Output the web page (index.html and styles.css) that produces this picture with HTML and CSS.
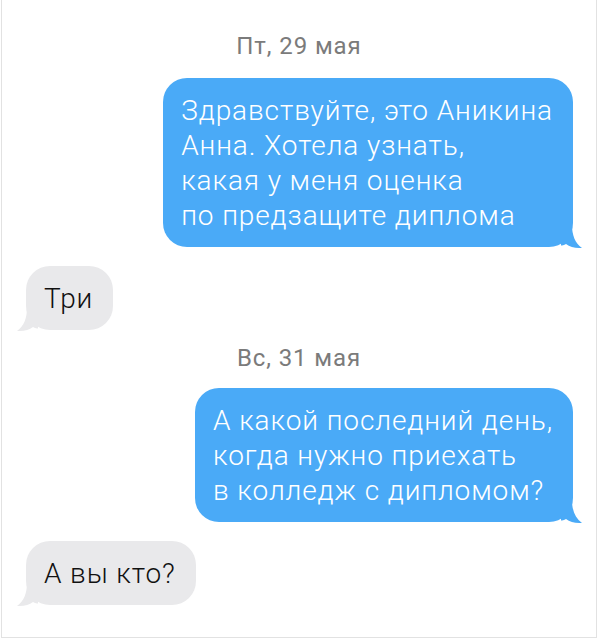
FILE: index.html
```html
<!DOCTYPE html>
<html lang="ru">
<head>
    <meta charset="UTF-8">
    <meta name="viewport" content="width=device-width, initial-scale=1.0">
    <title>Сообщения</title>
    <link rel="stylesheet" href="styles.css">
</head>
<body>
    <div class="chat">
        <div class="date date-first">Пт, 29 мая</div>

        <div class="bubble out">
            Здравствуйте, это Аникина<br>
            Анна. Хотела узнать,<br>
            какая у меня оценка<br>
            по предзащите диплома
            <svg class="tail" viewBox="0 0 22 24" width="22" height="24"><path d="M0 0 H11 C11 10 14 18 21 23 C14 23.5 9 22 5 19 C3 20 1 20.5 0 20.5 Z"/></svg>
        </div>

        <div class="bubble in">
            Три
            <svg class="tail" viewBox="0 0 22 24" width="22" height="24"><path d="M0 0 H11 C11 10 14 18 21 23 C14 23.5 9 22 5 19 C3 20 1 20.5 0 20.5 Z"/></svg>
        </div>

        <div class="date">Вс, 31 мая</div>

        <div class="bubble out">
            А какой последний день,<br>
            когда нужно приехать<br>
            в колледж с дипломом?
            <svg class="tail" viewBox="0 0 22 24" width="22" height="24"><path d="M0 0 H11 C11 10 14 18 21 23 C14 23.5 9 22 5 19 C3 20 1 20.5 0 20.5 Z"/></svg>
        </div>

        <div class="bubble in">
            А вы кто?
            <svg class="tail" viewBox="0 0 22 24" width="22" height="24"><path d="M0 0 H11 C11 10 14 18 21 23 C14 23.5 9 22 5 19 C3 20 1 20.5 0 20.5 Z"/></svg>
        </div>
    </div>
</body>
</html>
```

FILE: styles.css
```css
body {
    margin: 0;
    background: #fff;
    font-family: Roboto, "Noto Sans", sans-serif;
}
.chat {
    box-sizing: border-box;
    width: 596px;
    height: 638px;
    margin-left: 1px;
    border: 1px solid #e2e2e2;
    border-top: none;
    padding: 32px 0 0;
    display: flex;
    flex-direction: column;
}
.date {
    align-self: center;
    color: #7b7b7b;
    font-size: 24px;
    letter-spacing: 0.9px;
    line-height: 28px;
    margin: 14px 0 16px;
}
.date-first {
    margin: 0 0 18px;
}
.bubble {
    position: relative;
    font-size: 28px;
    font-weight: 300;
    letter-spacing: 0.9px;
    line-height: 35px;
    padding: 15px 20px 14px 18px;
    border-radius: 24px;
}
.bubble + .bubble {
    margin-top: 19px;
}
.out {
    align-self: flex-end;
    margin-right: 23px;
    background: #4aaaf7;
    color: #fff;
}
.in {
    align-self: flex-start;
    margin-left: 24px;
    background: #e9e9eb;
    color: #111;
}
.tail {
    position: absolute;
    bottom: -2px;
}
.out .tail {
    right: -10px;
    fill: #4aaaf7;
}
.in .tail {
    left: -10px;
    fill: #e9e9eb;
    transform: scaleX(-1);
}
```
